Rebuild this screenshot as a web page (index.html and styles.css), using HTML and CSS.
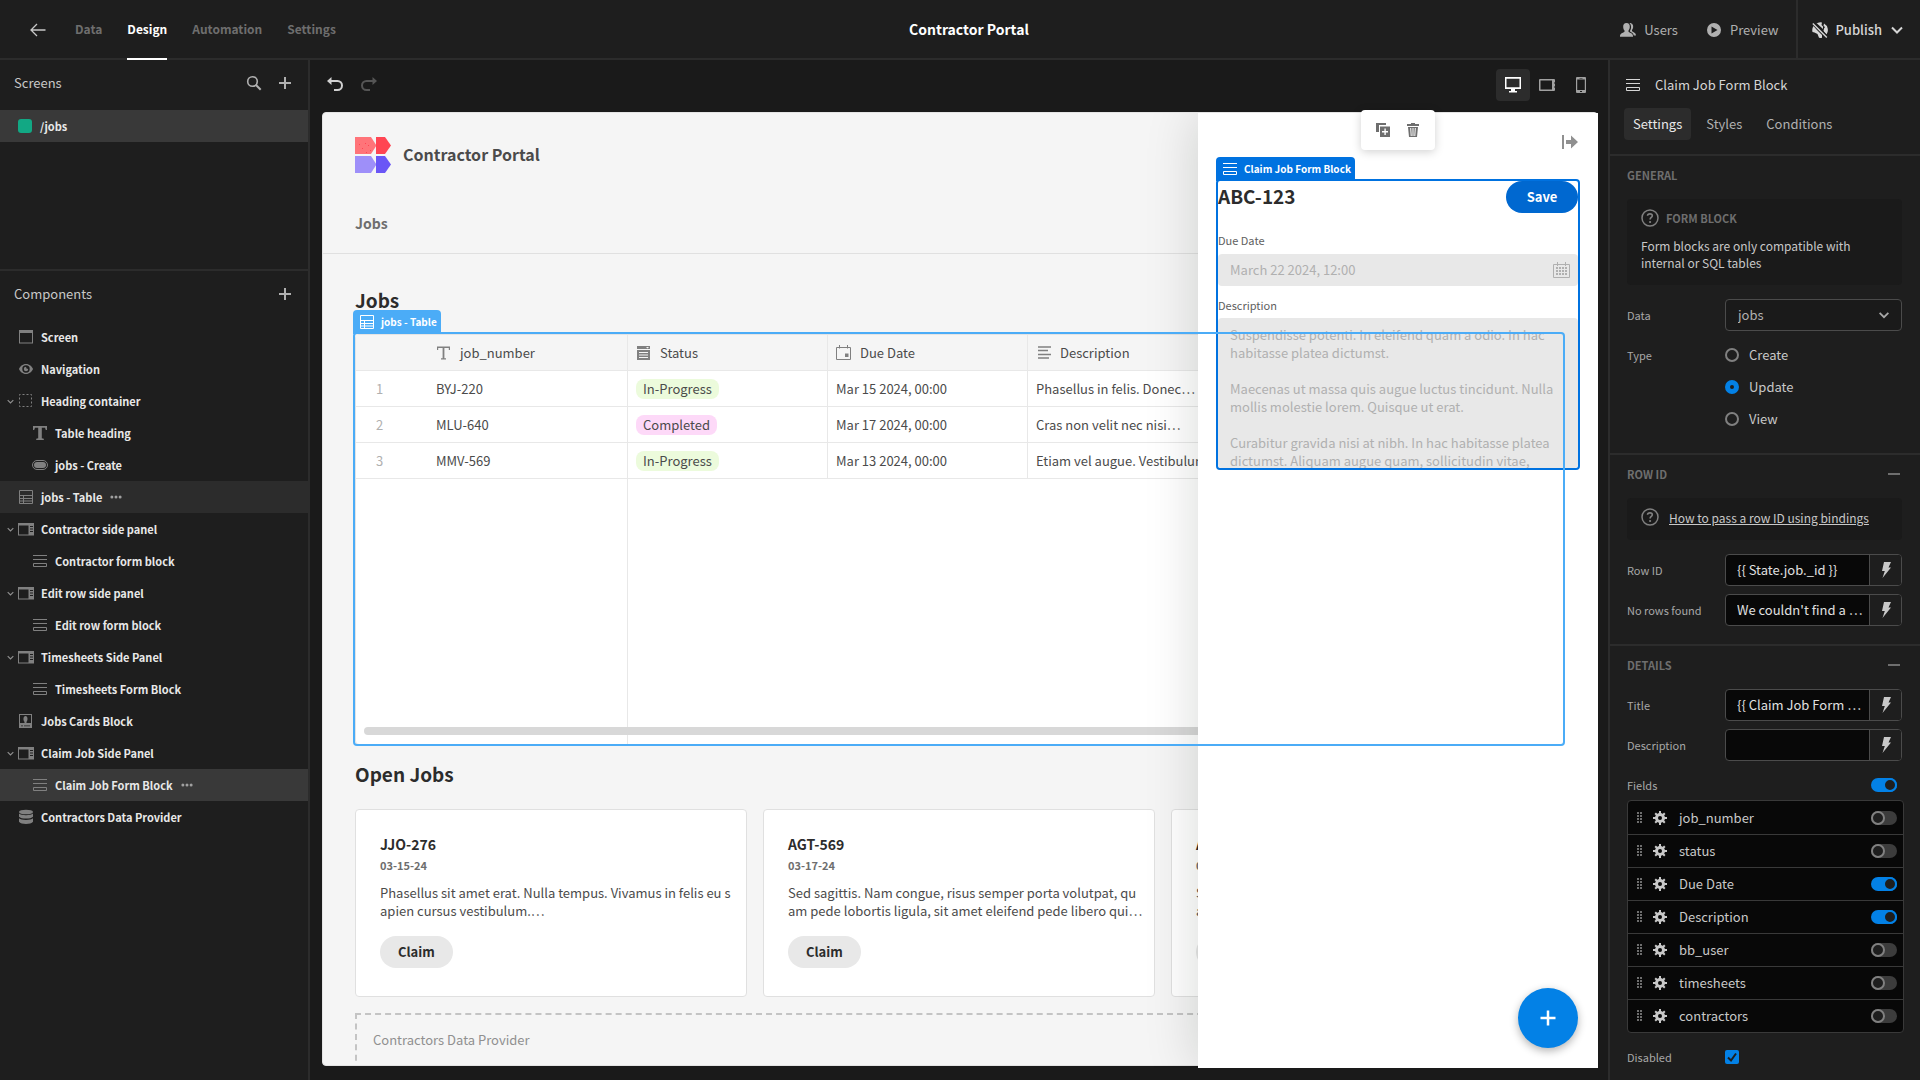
FILE: index.html
```html
<!DOCTYPE html>
<html lang="en">
<head>
<meta charset="utf-8">
<title>Contractor Portal</title>
<link rel="stylesheet" href="styles.css">
</head>
<body>
<svg class="sprite" aria-hidden="true">
  <symbol id="i-screen" viewBox="0 0 16 16"><path d="M1 1h14v13.500H1zM2 4v9.500h12V4z" fill="currentColor" fill-rule="evenodd"/></symbol>
  <symbol id="i-eye" viewBox="0 0 16 16"><path d="M8 3C4.500 3 2 5.500 1 8c1 2.500 3.500 5 7 5s6-2.500 7-5c-1-2.500-3.500-5-7-5zm0 1.300a3.700 3.700 0 1 1 0 7.400 3.700 3.700 0 0 1 0-7.400z" fill="currentColor" fill-rule="evenodd"/><path d="M8 5.800a2.200 2.200 0 1 0 2.200 2.200L8.500 7.500z" fill="currentColor"/></symbol>
  <symbol id="i-container" viewBox="0 0 16 16"><rect x="1.500" y="1.500" width="12" height="12" fill="none" stroke="currentColor" stroke-dasharray="2 2" stroke-dashoffset="1"/></symbol>
  <symbol id="i-text" viewBox="0 0 16 16"><path d="M1 1h14v4h-1.200L13 2.800H9.800v10.400l2 .6V15H4.200v-1.200l2-.6V2.800H3L2.200 5H1z" fill="currentColor"/></symbol>
  <symbol id="i-textthin" viewBox="0 0 16 16"><path d="M1 1.500h13V5h-1.200V3H8.400v10.300H10v1.200H5v-1.200h1.600V3H2.200v2H1z" fill="currentColor"/></symbol>
  <symbol id="i-button" viewBox="0 0 16 16"><rect x=".5" y="3.500" width="15" height="9" rx="4.500" fill="none" stroke="currentColor"/><rect x="2" y="5" width="12" height="6" rx="3" fill="currentColor"/></symbol>
  <symbol id="i-table" viewBox="0 0 16 16"><path d="M1.500 1.500h13v13h-13zM1.500 6.500h13M1.500 9.500h13M1.500 12h13M5.500 6.500v8" fill="none" stroke="currentColor"/></symbol>
  <symbol id="i-panel" viewBox="0 0 16 16"><path d="M0 2h16v12.500H0zM1 4.500v9h9.500v-9zM12 5v1h3V5zM12 7.500v1h3v-1zM12 10v1h3v-1z" fill="currentColor" fill-rule="evenodd"/></symbol>
  <symbol id="i-form" viewBox="0 0 16 16"><path d="M1 2.500h14M1 6.500h14M1.500 10.500h13v3h-13z" fill="none" stroke="currentColor"/></symbol>
  <symbol id="i-card" viewBox="0 0 16 16"><path d="M1 1h13v14H1zM2 2v8h4.500V8.800C5 7.500 5 3 7.500 3s2.500 4.500 1 5.800V10H13V2zM3 12.500v.8h2v-.8zM6 12.500v.8h6v-.8z" fill="currentColor" fill-rule="evenodd"/></symbol>
  <symbol id="i-data" viewBox="0 0 16 16"><ellipse cx="8" cy="3" rx="7" ry="2.300" fill="currentColor"/><path d="M1 4.500c2 2.200 12 2.200 14 0v3.200c-2 2.500-12 2.500-14 0zM1 9.300c2 2.200 12 2.200 14 0v3.400c-2 3-12 3-14 0z" fill="currentColor"/></symbol>
  <symbol id="i-chev" viewBox="0 0 16 16"><path d="M3 5.500l5 5 5-5" fill="none" stroke="currentColor" stroke-width="2"/></symbol>
  <symbol id="i-dots" viewBox="0 0 16 16"><circle cx="2.500" cy="8" r="2" fill="currentColor"/><circle cx="8" cy="8" r="2" fill="currentColor"/><circle cx="13.500" cy="8" r="2" fill="currentColor"/></symbol>
  <symbol id="i-plus" viewBox="0 0 16 16"><path d="M8 2v12M2 8h12" stroke="currentColor" stroke-width="2"/></symbol>
  <symbol id="i-search" viewBox="0 0 16 16"><circle cx="6.500" cy="6.500" r="4.800" fill="none" stroke="currentColor" stroke-width="1.600"/><path d="M10 10l4.700 4.700" stroke="currentColor" stroke-width="2"/></symbol>
  <symbol id="i-back" viewBox="0 0 16 16"><path d="M15.500 8H1.500M7 2L1 8l6 6" fill="none" stroke="currentColor" stroke-width="1.300"/></symbol>
  <symbol id="i-undo" viewBox="0 0 16 16"><path d="M4 4h6.500a4 4 0 0 1 0 9H7" fill="none" stroke="currentColor" stroke-width="2"/><path d="M0 4l4.500-4v8z" fill="currentColor"/></symbol>
  <symbol id="i-redo" viewBox="0 0 16 16"><path d="M12 4H5.500a4 4 0 0 0 0 9H9" fill="none" stroke="currentColor" stroke-width="2"/><path d="M16 4l-4.500-4v8z" fill="currentColor"/></symbol>
  <symbol id="i-desktop" viewBox="0 0 16 16"><path d="M0 0h16v12h-6v2h2v1.500H4V14h2v-2H0zM1.500 1.700v8.600h13V1.700z" fill="currentColor" fill-rule="evenodd"/></symbol>
  <symbol id="i-tablet" viewBox="0 0 16 16"><path d="M1 2h14a1 1 0 0 1 1 1v2.500h-1v1h1v3h-1v1h1V13a1 1 0 0 1-1 1H1a1 1 0 0 1-1-1V3a1 1 0 0 1 1-1zm.5 1.500v9h11.500v-9z" fill="currentColor" fill-rule="evenodd"/></symbol>
  <symbol id="i-phone" viewBox="0 0 16 16"><path d="M4 0h8a1 1 0 0 1 1 1v14a1 1 0 0 1-1 1H4a1 1 0 0 1-1-1V1a1 1 0 0 1 1-1zm.2 2.500v10.500h7.600V2.500zM7 14v1h2v-1zM6.500 1v.6h3V1z" fill="currentColor" fill-rule="evenodd"/></symbol>
  <symbol id="i-users" viewBox="0 0 16 16"><path d="M6.500 1C9 1 10 3 9.800 5.200c-.2 1.800-.9 2.700-1.300 3.300v1.200c.2.800 4.500 1.300 4.500 4.300v.7H0V14c0-3 4.300-3.500 4.500-4.300V8.500C4 8 3.400 7 3.200 5.200 3 3 4 1 6.500 1z" fill="currentColor"/><path d="M9.500 1c3 0 4 2.200 3.600 4.500-.2 1.300-.7 2-1.100 2.600v1c.3.900 4 1.600 4 4.300h-2.200c-.5-2.300-3-3.200-3.800-3.800V8.800c1.500-2.300 1.600-5.500-.5-7.800z" fill="currentColor"/></symbol>
  <symbol id="i-play" viewBox="0 0 16 16"><path d="M8 1a7 7 0 1 0 0 14A7 7 0 0 0 8 1zM5.500 4.500L11.500 8l-6 3.500z" fill="currentColor" fill-rule="evenodd"/></symbol>
  <symbol id="i-globe" viewBox="0 0 16 16"><path d="M4 1.800A7.200 7.200 0 0 1 10 .4L9.500 3l1.500 1.500V7L5 1.500zM12 1.500a7.600 7.600 0 0 1 2.500 11L11.500 9l.5-2.500 1-1.500-1.500-1zM1.500 4l3 3.500L10 13v2.700A7.500 7.500 0 0 1 7 15.800L5.500 12 2.500 10.500.5 10A7.500 7.500 0 0 1 1.500 4z" fill="currentColor"/><path d="M.5 .5l15 15" stroke="#1e1e1e" stroke-width="3"/><path d="M.8 1.500l14 14" stroke="currentColor" stroke-width="1.400"/></symbol>
  <symbol id="i-help" viewBox="0 0 18 18"><circle cx="9" cy="9" r="8" fill="none" stroke="currentColor" stroke-width="1.500"/><path d="M6.500 6.800C6.700 4.200 11.300 4.200 11.300 6.800c0 1.700-2.200 1.700-2.200 3.700" fill="none" stroke="currentColor" stroke-width="1.600"/><circle cx="9.100" cy="13" r="1.100" fill="currentColor"/></symbol>
  <symbol id="i-bolt" viewBox="0 0 16 16"><path d="M6 0h7l-2.500 5.500H13L4.500 16 6.800 9H4z" fill="currentColor"/></symbol>
  <symbol id="i-gear" viewBox="0 0 16 16"><path d="M8 1v14M1 8h14M3.200 3.200l9.600 9.600M12.800 3.200l-9.600 9.600" stroke="currentColor" stroke-width="2"/><circle cx="8" cy="8" r="5" fill="currentColor"/><circle cx="8" cy="8" r="2" fill="#080808"/></symbol>
  <symbol id="i-grip" viewBox="0 0 6 12"><path d="M0 0h2v2H0zM3 0h2v2H3zM0 3h2v2H0zM3 3h2v2H3zM0 6h2v2H0zM3 6h2v2H3zM0 9h2v2H0zM3 9h2v2H3z" fill="currentColor"/></symbol>
  <symbol id="i-minus" viewBox="0 0 12 12"><path d="M0 6h12" stroke="currentColor" stroke-width="2"/></symbol>
  <symbol id="i-copy" viewBox="0 0 16 16"><path d="M1 1h10v2H4v7H1z" fill="currentColor"/><path d="M5 4.500h10V15H5zM9.400 6.500v2.600H7v1.400h2.400V13h1.400v-2.500H13V9.100h-2.200V6.500z" fill="currentColor" fill-rule="evenodd"/></symbol>
  <symbol id="i-trash" viewBox="0 0 16 16"><path d="M2 2h4V1h4v1h4v2H2zM3 5h10l-1 10H4zM5.200 6l.5 8h1l-.5-8zM7.500 6v8h1V6zM9.800 6l-.5 8h1l.5-8z" fill="currentColor" fill-rule="evenodd"/></symbol>
  <symbol id="i-close" viewBox="0 0 16 16"><path d="M0 1h2v14H0zM4 6h5V1.500L16 8l-7 6.500V10H4z" fill="currentColor"/></symbol>
  <symbol id="i-cal" viewBox="0 0 18 18"><path d="M.5 3.500h16v13H.5zM4.500 1v4M12.500 1v4" fill="none" stroke="currentColor"/><path d="M3 7h11M3 10h11M3 13h11" stroke="currentColor" stroke-width="2" stroke-dasharray="2 1"/></symbol>
  <symbol id="i-date" viewBox="0 0 16 16"><path d="M.5 2.500h14v12H.5zM3.500 0v3.500M11.500 0v3.500" fill="none" stroke="currentColor"/><path d="M9 8.500h3.500V12H9z" fill="currentColor"/></symbol>
  <symbol id="i-options" viewBox="0 0 16 16"><path d="M1 1h13v3H1zM10 2l1.500 1.500L13 2zM2 5h12v10H1V5zM3 7v1h9V7zM3 9.500v1h9v-1zM3 12v1h9v-1z" fill="currentColor" fill-rule="evenodd"/></symbol>
  <symbol id="i-lines" viewBox="0 0 16 16"><path d="M2 2h13M2 5.500h10M2 9.500h13M2 13h11" stroke="currentColor" stroke-width="1.500"/></symbol>
</svg>

<div class="builder">
  <header class="topbar">
    <nav class="topnav">
      <a class="back" href="#" aria-label="Back"><svg class="ic"><use href="#i-back"/></svg></a>
      <a class="toptab" href="#">Data</a>
      <a class="toptab is-active" href="#">Design</a>
      <a class="toptab" href="#">Automation</a>
      <a class="toptab" href="#">Settings</a>
    </nav>
    <h1 class="apptitle">Contractor Portal</h1>
    <div class="topactions">
      <button class="action"><svg class="ic"><use href="#i-users"/></svg>Users</button>
      <button class="action"><svg class="ic"><use href="#i-play"/></svg>Preview</button>
      <button class="publish"><svg class="ic"><use href="#i-globe"/></svg>Publish<svg class="ic"><use href="#i-chev"/></svg></button>
    </div>
  </header>

  <aside class="left">
    <section class="screens">
      <div class="panelhead"><h2>Screens</h2>
        <button aria-label="Search screens"><svg class="ic"><use href="#i-search"/></svg></button>
        <button aria-label="Add screen"><svg class="ic"><use href="#i-plus"/></svg></button>
      </div>
      <a class="screenrow" href="#"><span class="swatch"></span>/jobs</a>
    </section>
    <section>
      <div class="panelhead"><h2>Components</h2>
        <button aria-label="Add component"><svg class="ic"><use href="#i-plus"/></svg></button>
      </div>
      <ul class="tree">
        <li class="node"><span class="fold"></span><svg class="ic"><use href="#i-screen"/></svg>Screen</li>
        <li class="node"><span class="fold"></span><svg class="ic"><use href="#i-eye"/></svg>Navigation</li>
        <li class="node"><svg class="fold"><use href="#i-chev"/></svg><svg class="ic"><use href="#i-container"/></svg>Heading container</li>
        <li class="node child"><span class="fold"></span><svg class="ic"><use href="#i-text"/></svg>Table heading</li>
        <li class="node child"><span class="fold"></span><svg class="ic"><use href="#i-button"/></svg>jobs - Create</li>
        <li class="node is-hover"><span class="fold"></span><svg class="ic"><use href="#i-table"/></svg>jobs - Table<button class="more" aria-label="More"><svg class="dots"><use href="#i-dots"/></svg></button></li>
        <li class="node"><svg class="fold"><use href="#i-chev"/></svg><svg class="ic"><use href="#i-panel"/></svg>Contractor side panel</li>
        <li class="node child"><span class="fold"></span><svg class="ic"><use href="#i-form"/></svg>Contractor form block</li>
        <li class="node"><svg class="fold"><use href="#i-chev"/></svg><svg class="ic"><use href="#i-panel"/></svg>Edit row side panel</li>
        <li class="node child"><span class="fold"></span><svg class="ic"><use href="#i-form"/></svg>Edit row form block</li>
        <li class="node"><svg class="fold"><use href="#i-chev"/></svg><svg class="ic"><use href="#i-panel"/></svg>Timesheets Side Panel</li>
        <li class="node child"><span class="fold"></span><svg class="ic"><use href="#i-form"/></svg>Timesheets Form Block</li>
        <li class="node"><span class="fold"></span><svg class="ic"><use href="#i-card"/></svg>Jobs Cards Block</li>
        <li class="node"><svg class="fold"><use href="#i-chev"/></svg><svg class="ic"><use href="#i-panel"/></svg>Claim Job Side Panel</li>
        <li class="node child is-selected"><span class="fold"></span><svg class="ic"><use href="#i-form"/></svg>Claim Job Form Block<button class="more" aria-label="More"><svg class="dots"><use href="#i-dots"/></svg></button></li>
        <li class="node"><span class="fold"></span><svg class="ic"><use href="#i-data"/></svg>Contractors Data Provider</li>
      </ul>
    </section>
  </aside>

  <main class="canvas">
    <div class="canvasbar">
      <button class="undo" aria-label="Undo"><svg class="ic"><use href="#i-undo"/></svg></button>
      <button class="undo redo" aria-label="Redo"><svg class="ic"><use href="#i-redo"/></svg></button>
      <div class="devices">
        <button class="device is-active" aria-label="Desktop"><svg class="ic"><use href="#i-desktop"/></svg></button>
        <button class="device" aria-label="Tablet"><svg class="ic"><use href="#i-tablet"/></svg></button>
        <button class="device" aria-label="Mobile"><svg class="ic"><use href="#i-phone"/></svg></button>
      </div>
    </div>
    <div class="frame">
      <div class="app">
        <header class="apphead">
          <div class="brand">
            <svg class="logo" viewBox="0 0 36 36"><path d="M0 0h16l5.500 8.500L16 17H0z" fill="#ff7479"/><path d="M21 0h9l6 8.500L30 17h-9z" fill="#ff4553"/><path d="M0 19h16l5.500 8.500L16 36H0z" fill="#9e8ff9"/><path d="M21 19h9l6 8.500L30 36h-9z" fill="#6a56f6"/><path d="M4 7h1v1H4zM10 6h1v1h-1zM13 8h1v1h-1zM7 11h1v1H7zM15 13h1v1h-1zM11 15h1v1h-1z" fill="#ff4553"/></svg>
            <span>Contractor Portal</span>
          </div>
          <a class="applink" href="#">Jobs</a>
        </header>
        <div class="content">
          <h2 class="heading">Jobs</h2>
          <div class="tablewrap">
            <table class="jobs">
              <colgroup><col class="c-num"><col class="c-cell"><col class="c-cell"><col class="c-cell"><col></colgroup>
              <thead><tr>
                <th></th>
                <th class="edge"><span><svg class="ic"><use href="#i-textthin"/></svg>job_number</span></th>
                <th class="edge"><span><svg class="ic"><use href="#i-options"/></svg>Status</span></th>
                <th class="edge"><span><svg class="ic"><use href="#i-date"/></svg>Due Date</span></th>
                <th><span><svg class="ic"><use href="#i-lines"/></svg>Description</span></th>
              </tr></thead>
              <tbody>
                <tr><td class="num">1</td><td class="edge">BYJ-220</td><td class="edge"><span class="pill">In-Progress</span></td><td class="edge">Mar 15 2024, 00:00</td><td>Phasellus in felis. Donec…</td></tr>
                <tr><td class="num">2</td><td class="edge">MLU-640</td><td class="edge"><span class="pill pink">Completed</span></td><td class="edge">Mar 17 2024, 00:00</td><td>Cras non velit nec nisi…</td></tr>
                <tr><td class="num">3</td><td class="edge">MMV-569</td><td class="edge"><span class="pill">In-Progress</span></td><td class="edge">Mar 13 2024, 00:00</td><td>Etiam vel augue. Vestibulum</td></tr>
                <tr class="rest"><td></td><td class="edge"></td><td></td><td></td><td></td></tr>
              </tbody>
            </table>
            <div class="scroller"></div>
            <div class="outline hover"><span class="tag"><svg class="ic"><use href="#i-table"/></svg>jobs - Table</span></div>
          </div>
          <h2 class="heading second">Open Jobs</h2>
          <div class="cards">
            <article class="card"><h3>JJO-276</h3><p class="when">03-15-24</p><p class="body">Phasellus sit amet erat. Nulla tempus. Vivamus in felis eu s<br>apien cursus vestibulum.…</p><button class="claim">Claim</button></article>
            <article class="card"><h3>AGT-569</h3><p class="when">03-17-24</p><p class="body">Sed sagittis. Nam congue, risus semper porta volutpat, qu<br>am pede lobortis ligula, sit amet eleifend pede libero qui…</p><button class="claim">Claim</button></article>
            <article class="card"><h3>ABC-123</h3><p class="when">03-22-24</p><p class="body">Suspendisse potenti. In eleifend quam a odio. In h<br>ac habitasse platea dictumst.…</p><button class="claim">Claim</button></article>
          </div>
          <div class="provider">Contractors Data Provider</div>
        </div>
      </div>

      <aside class="sidepanel">
        <button class="closebtn" aria-label="Close panel"><svg class="ic"><use href="#i-close"/></svg></button>
        <form class="claimform">
          <div class="formhead"><h2>ABC-123</h2><button type="button" class="save">Save</button></div>
          <label for="due">Due Date</label>
          <div class="datefield"><input id="due" type="text" value="March 22 2024, 12:00" disabled><svg class="cal"><use href="#i-cal"/></svg></div>
          <label for="desc">Description</label>
          <textarea id="desc" disabled>Suspendisse potenti. In eleifend quam a odio. In hac
habitasse platea dictumst.

Maecenas ut massa quis augue luctus tincidunt. Nulla
mollis molestie lorem. Quisque ut erat.

Curabitur gravida nisi at nibh. In hac habitasse platea
dictumst. Aliquam augue quam, sollicitudin vitae,</textarea>
          <div class="outline selected"><span class="tag"><svg class="ic"><use href="#i-form"/></svg>Claim Job Form Block</span></div>
        </form>
      </aside>
      <div class="quick">
        <button aria-label="Duplicate"><svg class="ic"><use href="#i-copy"/></svg></button>
        <button aria-label="Delete"><svg class="ic"><use href="#i-trash"/></svg></button>
      </div>
      <button class="fab" aria-label="Add component"><svg class="ic"><use href="#i-plus"/></svg></button>
    </div>
  </main>

  <aside class="right">
    <div class="righthead">
      <h2><svg class="ic"><use href="#i-form"/></svg>Claim Job Form Block</h2>
      <div class="tabs"><button class="tab is-active">Settings</button><button class="tab">Styles</button><button class="tab">Conditions</button></div>
    </div>
    <section class="group">
      <h3>GENERAL</h3>
      <div class="info">
        <div class="infotitle"><svg class="help"><use href="#i-help"/></svg>FORM BLOCK</div>
        <p>Form blocks are only compatible with<br>internal or SQL tables</p>
      </div>
      <div class="prop"><label for="data">Data</label><div class="select"><select id="data"><option>jobs</option></select><svg class="ic"><use href="#i-chev"/></svg></div></div>
      <div class="prop" role="radiogroup" aria-labelledby="type">
        <span class="lbl" id="type">Type</span>
        <div class="radios">
          <label><input type="radio" name="type">Create</label>
          <label><input type="radio" name="type" checked>Update</label>
          <label><input type="radio" name="type">View</label>
        </div>
      </div>
    </section>
    <section class="group">
      <h3>ROW ID<svg class="minus"><use href="#i-minus"/></svg></h3>
      <div class="info inforow"><svg class="help"><use href="#i-help"/></svg><a href="#">How to pass a row ID using bindings</a></div>
      <div class="prop"><label for="rowid">Row ID</label><div class="bind"><input id="rowid" type="text" value="{{ State.job._id }}"><button aria-label="Bind Row ID"><svg class="ic"><use href="#i-bolt"/></svg></button></div></div>
      <div class="prop"><label for="norows">No rows found</label><div class="bind"><input id="norows" type="text" value="We couldn't find a …"><button aria-label="Bind No rows found"><svg class="ic"><use href="#i-bolt"/></svg></button></div></div>
    </section>
    <section class="group">
      <h3>DETAILS<svg class="minus"><use href="#i-minus"/></svg></h3>
      <div class="prop"><label for="title">Title</label><div class="bind"><input id="title" type="text" value="{{ Claim Job Form …"><button aria-label="Bind Title"><svg class="ic"><use href="#i-bolt"/></svg></button></div></div>
      <div class="prop"><label for="fdesc">Description</label><div class="bind"><input id="fdesc" type="text" value=""><button aria-label="Bind Description"><svg class="ic"><use href="#i-bolt"/></svg></button></div></div>
      <div>
        <div class="fieldshead"><label for="fields">Fields</label><input id="fields" class="switch" type="checkbox" checked></div>
        <ul class="fields">
          <li><svg class="grip"><use href="#i-grip"/></svg><svg class="ic"><use href="#i-gear"/></svg><label for="f1">job_number</label><input id="f1" class="switch" type="checkbox"></li>
          <li><svg class="grip"><use href="#i-grip"/></svg><svg class="ic"><use href="#i-gear"/></svg><label for="f2">status</label><input id="f2" class="switch" type="checkbox"></li>
          <li><svg class="grip"><use href="#i-grip"/></svg><svg class="ic"><use href="#i-gear"/></svg><label for="f3">Due Date</label><input id="f3" class="switch" type="checkbox" checked></li>
          <li><svg class="grip"><use href="#i-grip"/></svg><svg class="ic"><use href="#i-gear"/></svg><label for="f4">Description</label><input id="f4" class="switch" type="checkbox" checked></li>
          <li><svg class="grip"><use href="#i-grip"/></svg><svg class="ic"><use href="#i-gear"/></svg><label for="f5">bb_user</label><input id="f5" class="switch" type="checkbox"></li>
          <li><svg class="grip"><use href="#i-grip"/></svg><svg class="ic"><use href="#i-gear"/></svg><label for="f6">timesheets</label><input id="f6" class="switch" type="checkbox"></li>
          <li><svg class="grip"><use href="#i-grip"/></svg><svg class="ic"><use href="#i-gear"/></svg><label for="f7">contractors</label><input id="f7" class="switch" type="checkbox"></li>
        </ul>
      </div>
      <div class="prop"><label for="disabled">Disabled</label><span class="check"><input id="disabled" type="checkbox" checked><svg viewBox="0 0 14 14"><path d="M3 7.500l3 3L11 3.500" fill="none" stroke="#1e1e1e" stroke-width="2"/></svg></span></div>
    </section>
  </aside>
</div>
</body>
</html>
```
FILE: styles.css
```css
*, *::before { box-sizing: border-box; }
body {
  margin: 0;
  background: #1a1a1a;
  color: #e8e8e8;
  font-family: "Noto Sans CJK SC", "Noto Sans", sans-serif;
  font-size: 13px;
  line-height: 18px;
}
h1, h2, h3, p, ul { margin: 0; padding: 0; font-weight: 400; }
ul { list-style: none; }
a { color: inherit; text-decoration: none; }
button, input, select, textarea { font: inherit; color: inherit; margin: 0; }
button { background: none; border: 0; padding: 0; cursor: pointer; }
.sprite { position: absolute; width: 0; height: 0; }
.ic { width: 16px; height: 16px; flex: none; display: block; }

.builder {
  display: grid;
  grid-template: 60px minmax(0, 1fr) / 310px minmax(0, 1fr) 312px;
  height: 100vh;
  overflow: hidden;
}

/* Top bar */
.topbar {
  grid-column: 1 / -1;
  display: grid;
  grid-template-columns: 1fr auto 1fr;
  padding-left: 18px;
  background: #1e1e1e;
  border-bottom: 2px solid #2c2c2c;
}
.topnav { display: flex; gap: 25px; padding-left: 12px; font-size: 12px; }
.back { display: flex; align-items: center; color: #c8c8c8; margin-right: 4px; }
.toptab { height: 60px; line-height: 58px; font-weight: 700; color: #6e6e6e; }
.toptab.is-active { color: #fff; border-bottom: 2px solid #fff; }
.apptitle { font-size: 14px; line-height: 58px; font-weight: 700; color: #fff; }
.topactions { display: flex; justify-content: flex-end; }
.action, .publish { display: flex; align-items: center; gap: 8px; }
.action { color: #b0b0b0; margin-right: 28px; }
.action + .action { margin-right: 18px; }
.publish { gap: 7px; border-left: 2px solid #2c2c2c; padding: 0 15px 0 14px; color: #d6d6d6; font-weight: 500; }

/* Left column */
.left { background: #1e1e1e; border-right: 2px solid #2c2c2c; }
.screens { height: 211px; border-bottom: 2px solid #2c2c2c; }
.panelhead { display: flex; align-items: center; gap: 15px; height: 50px; padding: 0 15px 4px 14px; color: #c8c8c8; }
.panelhead h2 { flex: 1; font-size: 13px; }
.panelhead button { color: #b0b0b0; }
.screenrow { display: flex; align-items: center; gap: 8px; height: 32px; padding-left: 18px; background: #393939; font-size: 11px; font-weight: 700; }
.swatch { width: 14px; height: 14px; border-radius: 3px; background: #12a884; }
.node { display: flex; align-items: center; height: 32px; padding-left: 6px; font-size: 11px; font-weight: 700; }
.node.child { padding-left: 20px; }
.node .ic { margin: 0 7px 0 3px; color: #808080; }
.fold { width: 9px; height: 9px; color: #909090; flex: none; }
.node.is-hover { background: #2c2c2c; }
.node.is-selected { background: #393939; }
.more { margin-left: 8px; color: #a0a0a0; }
.dots { display: block; width: 12px; height: 12px; }

/* Canvas */
.canvas { display: flex; flex-direction: column; padding: 0 10px 14px 12px; background: #1a1a1a; }
.canvasbar { display: flex; align-items: center; gap: 18px; height: 52px; flex: none; padding: 0 0 2px 5px; }
.undo { color: #d0d0d0; }
.redo { color: #555; }
.devices { display: flex; margin-left: auto; }
.device { display: grid; place-items: center; width: 34px; height: 32px; border-radius: 4px; color: #a0a0a0; }
.device.is-active { background: #2c2c2c; color: #fff; }
.frame { position: relative; flex: 1; min-height: 0; }
.app { height: 100%; overflow: hidden; border-radius: 4px; background: #f5f5f5; border: 1px solid #e4e4e4; color: #4b4b4b; }
.apphead { height: 141px; padding: 24px 32px 0; border-bottom: 1px solid #e0e0e0; }
.brand { display: flex; align-items: center; gap: 12px; font-size: 16px; font-weight: 700; height: 36px; }
.brand span { padding-bottom: 2px; }
.logo { width: 36px; height: 36px; }
.applink { display: inline-block; margin-top: 39px; font-size: 14px; line-height: 22px; font-weight: 700; color: #6e6e6e; }
.content { padding: 31px 33px 0 32px; }
.heading { font-size: 19px; line-height: 30px; font-weight: 700; color: #2c2c2c; margin-bottom: 19px; }
.heading.second { margin: 14px 0 20px; }

.tablewrap { position: relative; height: 411px; background: #fff; border: 1px solid #e4e4e4; border-radius: 4px; }
.jobs { width: 100%; height: 100%; table-layout: fixed; border-spacing: 0; }
.c-num { width: 72px; }
.c-cell { width: 200px; }
.jobs th, .jobs td { height: 36px; padding: 0 8px; border-bottom: 1px solid #e8e8e8; white-space: nowrap; overflow: hidden; text-align: left; font-weight: 400; }
.jobs th { background: #f5f5f5; }
.jobs th span { display: flex; align-items: center; gap: 8px; }
.jobs th .ic { color: #808080; }
.jobs .edge { border-right: 1px solid #e8e8e8; }
.jobs .num { padding-left: 20px; color: #b0b0b0; }
.jobs .rest td { height: auto; border-bottom: 0; }
.pill { display: inline-block; padding: 1px 7px; border-radius: 8px; background: #ecfbdc; }
.pill.pink { background: #fdd9f8; }
.scroller { position: absolute; left: 8px; right: 8px; bottom: 9px; height: 8px; border-radius: 4px; background: #d8d8d8; }

.outline { position: absolute; inset: -3px -2px -2px -3px; z-index: 2; border: 2px solid #4bacf7; border-radius: 4px; pointer-events: none; }
.tag { position: absolute; left: -2px; bottom: 100%; display: flex; align-items: center; gap: 6px; height: 24px; padding: 0 4px 0 6px; border-radius: 4px 4px 0 0; background: #4bacf7; color: #fff; font-size: 10px; font-weight: 700; white-space: nowrap; }
.outline.selected { inset: -2px; border-color: #0072e0; }
.selected .tag { background: #0072e0; }

.cards { display: flex; gap: 16px; overflow: hidden; }
.card { flex: 0 0 392px; min-width: 0; height: 188px; padding: 24px; background: #fff; border: 1px solid #e0e0e0; border-radius: 4px; white-space: nowrap; }
.card h3 { font-size: 14px; line-height: 20px; font-weight: 700; color: #2c2c2c; }
.when { font-size: 11px; line-height: 18px; margin-top: 2px; font-weight: 700; color: #6e6e6e; }
.body { margin-top: 10px; }
.claim { height: 32px; margin-top: 16px; padding: 0 18px; border-radius: 16px; background: #e8e8e8; color: #2c2c2c; font-weight: 700; }
.provider { margin-top: 16px; height: 100px; padding: 16px; border: 2px dashed #c4c4c4; color: #909090; }

/* Side panel */
.sidepanel { position: absolute; top: 1px; right: 0; bottom: -2px; width: 400px; padding: 20px; z-index: 1; background: #fff; box-shadow: 0 0 50px rgba(0, 20, 10, .16); clip-path: inset(0 0 0 -60px); color: #4b4b4b; }
.closebtn { display: block; margin: 1px 0 31px auto; color: #909090; }
.claimform { position: relative; display: flex; flex-direction: column; }
.formhead { display: flex; justify-content: space-between; }
.formhead h2 { font-size: 19px; line-height: 30px; font-weight: 700; color: #2c2c2c; }
.save { width: 72px; height: 32px; border-radius: 16px; background: #0068d0; color: #fff; font-weight: 700; }
.claimform label { font-size: 11px; line-height: 16px; margin: 19px 0 6px; color: #5e5e5e; }
.datefield { display: flex; align-items: center; height: 32px; padding: 0 7px 0 12px; border-radius: 4px; background: #e8e8e8; color: #b0b0b0; }
.datefield input { flex: 1; min-width: 0; padding: 0; border: 0; background: none; }
.cal { width: 18px; height: 18px; }
.claimform .datefield + label { margin: 11px 0 5px; }
.claimform textarea { height: 150px; padding: 8px 12px; border: 0; border-radius: 4px; background: #e8e8e8; color: #b0b0b0; resize: none; overflow: hidden; white-space: pre; }
.sidepanel .outline { z-index: auto; }
.quick { position: absolute; z-index: 3; top: -2px; right: 163px; display: flex; gap: 14px; padding: 12px 14px; border-radius: 4px; background: #fff; color: #6e6e6e; box-shadow: 0 2px 10px rgba(0, 0, 0, .18); }
.fab { position: absolute; z-index: 3; right: 20px; bottom: 18px; display: grid; place-items: center; width: 60px; height: 60px; border-radius: 50%; background: #0381e6; color: #fff; box-shadow: 0 3px 8px rgba(0, 0, 0, .3); }
.fab .ic { width: 20px; height: 20px; }

/* Right column */
.right { background: #1e1e1e; border-left: 2px solid #2c2c2c; overflow: hidden; color: #c8c8c8; }
.righthead { height: 96px; padding: 14px; border-bottom: 2px solid #2c2c2c; }
.righthead h2 { display: flex; align-items: center; gap: 14px; height: 22px; padding-left: 1px; font-size: 13px; color: #d6d6d6; }
.tabs { display: flex; gap: 6px; margin-top: 12px; }
.tab { height: 32px; padding: 0 9px; border-radius: 4px; color: #b0b0b0; }
.tab.is-active { background: #2c2c2c; color: #e8e8e8; }
.group { padding: 10px 18px 18px 17px; border-bottom: 2px solid #2c2c2c; display: flex; flex-direction: column; gap: 8px; }
.group h3 { display: flex; align-items: center; justify-content: space-between; height: 17px; margin-bottom: 8px; font-size: 11px; font-weight: 700; color: #6e6e6e; }
.minus { width: 12px; height: 12px; margin-right: 2px; }
.info { padding: 10px 14px 14px; margin-bottom: 6px; border-radius: 4px; background: #1a1a1a; font-size: 12px; line-height: 17px; }
.infotitle { display: flex; align-items: center; gap: 7px; margin-bottom: 10px; font-size: 11px; font-weight: 700; color: #6e6e6e; height: 18px; }
.help { width: 18px; height: 18px; color: #808080; flex: none; }
.inforow { display: flex; align-items: center; gap: 10px; height: 42px; padding: 0 14px 4px; }
.inforow a { text-decoration: underline; font-size: 12px; }
.prop { display: grid; grid-template-columns: 98px minmax(0, 1fr); }
.prop > label, .lbl { font-size: 11px; line-height: 32px; color: #a8a8a8; }
.select { position: relative; }
.select select { appearance: none; width: 100%; height: 32px; padding: 0 12px; border: 1px solid #4b4b4b; border-radius: 4px; background: #1a1a1a; color: #b0b0b0; }
.select .ic { position: absolute; right: 11px; top: 9px; width: 14px; height: 14px; pointer-events: none; color: #a8a8a8; }
.radios label { display: flex; align-items: center; gap: 10px; height: 32px; }
.radios input { appearance: none; width: 14px; height: 14px; border: 2px solid #808080; border-radius: 50%; }
.radios input:checked { border: 5px solid #0381e6; }
.bind { display: flex; height: 32px; border: 1px solid #4b4b4b; border-radius: 4px; background: #080808; overflow: hidden; }
.bind input { flex: 1; min-width: 0; padding: 0 0 0 11px; border: 0; background: none; color: #e0e0e0; }
.bind button { display: grid; place-items: center; width: 32px; border-left: 1px solid #4b4b4b; background: #1e1e1e; }
.fieldshead { display: flex; align-items: center; justify-content: space-between; height: 31px; padding-right: 5px; font-size: 11px; color: #a8a8a8; }
.fields { margin-right: -2px; border: 1px solid #393939; border-radius: 4px; background: #080808; }
.fields li { display: flex; align-items: center; height: 33px; padding: 0 6px 0 9px; }
.fields li + li { border-top: 1px solid #393939; }
.fields label { flex: 1; margin-left: 11px; }
.fields .ic { margin-left: 9px; }
.grip { width: 6px; height: 12px; color: #6e6e6e; }
.switch { appearance: none; width: 26px; height: 14px; border-radius: 7px; background: #3c3c3c; }
.switch::before { content: ""; display: block; width: 14px; height: 14px; border: 2px solid #808080; border-radius: 50%; background: #1e1e1e; }
.switch:checked { background: #0381e6; }
.switch:checked::before { margin-left: 12px; border-color: #0381e6; }
.check { display: grid; align-content: center; }
.check > * { grid-area: 1 / 1; width: 14px; height: 14px; }
.check input { appearance: none; border-radius: 2px; background: #0381e6; }
.check svg { pointer-events: none; z-index: 1; }
```
